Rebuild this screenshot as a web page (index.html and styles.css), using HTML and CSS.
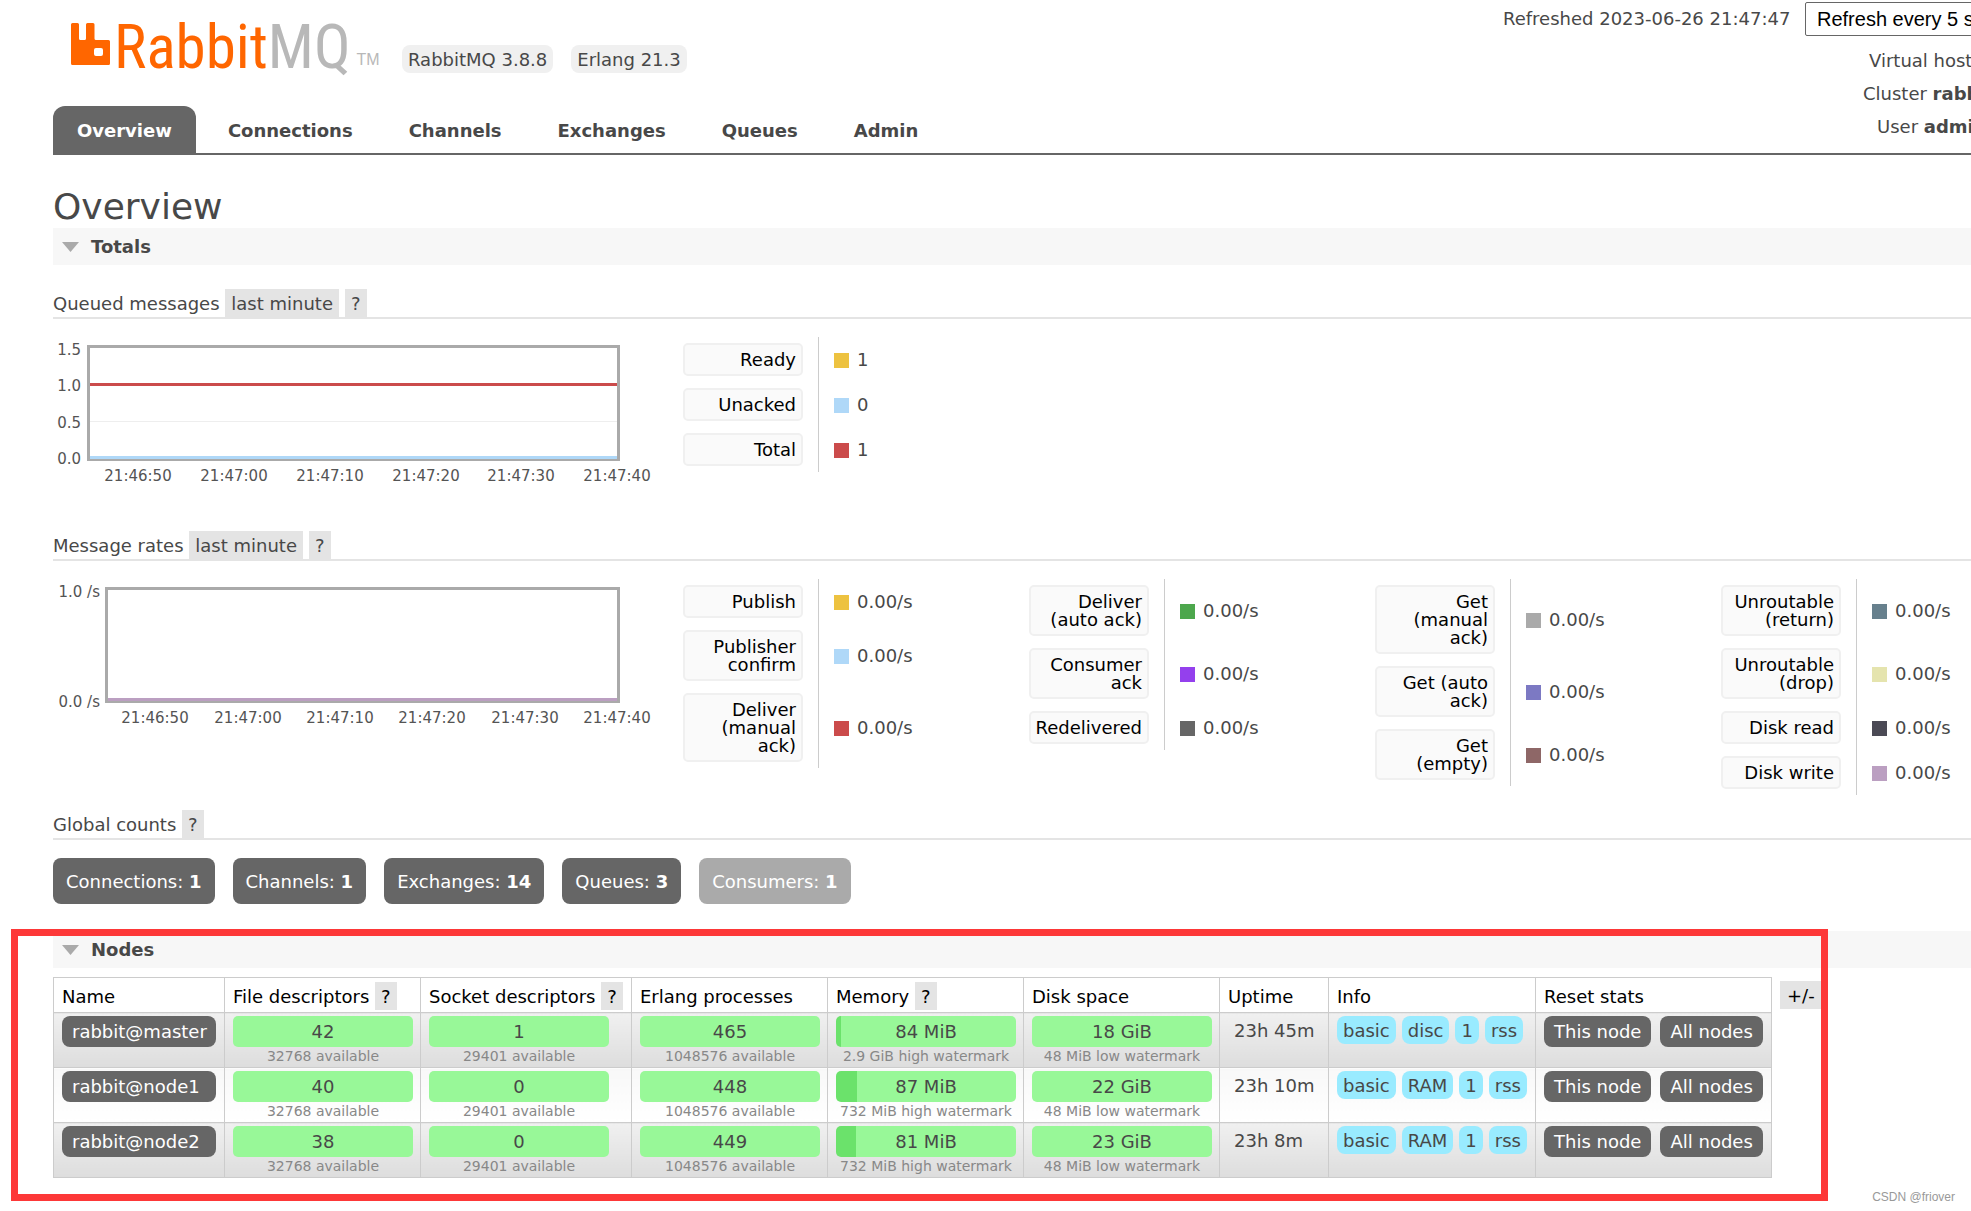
FILE: index.html
```html
<!DOCTYPE html>
<html lang="en">
<head>
<meta charset="utf-8">
<title>RabbitMQ Management</title>
<link rel="stylesheet" href="styles.css">
</head>
<body>
<header class="header">
  <div class="header-main">
    <div class="brand">
      <a class="logo" href="#">
        <svg class="logo-mark" viewBox="0 0 39 42" width="39" height="42" aria-hidden="true"><path fill="#f60" fill-rule="evenodd" d="M1.500 0H6.500Q8 0 8 1.500V15.500Q8 17 9.500 17H13.500Q15 17 15 15.500V1.500Q15 0 16.500 0H22Q23.500 0 23.500 1.500V15.500Q23.500 17 25 17H37.500Q39 17 39 18.500V40.500Q39 42 37.500 42H1.500Q0 42 0 40.500V1.500Q0 0 1.500 0ZM25 25Q23 25 23 27V31Q23 33 25 33H30Q32 33 32 31V27Q32 25 30 25Z"/></svg>
        <span class="logo-text">Rabbit<span class="logo-mq">MQ</span></span><span class="logo-tm">TM</span>
      </a>
      <span class="version">RabbitMQ 3.8.8</span>
      <span class="version">Erlang 21.3</span>
    </div>
    <nav class="tabs">
      <a class="tab selected" href="#">Overview</a>
      <a class="tab" href="#">Connections</a>
      <a class="tab" href="#">Channels</a>
      <a class="tab" href="#">Exchanges</a>
      <a class="tab" href="#">Queues</a>
      <a class="tab" href="#">Admin</a>
    </nav>
  </div>
  <div class="status">
    <div class="refresh">
      <label for="update-every">Refreshed 2023-06-26 21:47:47</label>
      <select id="update-every"><option>Refresh every 5 seconds</option></select>
    </div>
    <div class="status-row vhost">Virtual host</div>
    <div class="status-row cluster">Cluster <b>rabbit@master</b></div>
    <div class="status-row user">User <b>admin</b></div>
  </div>
</header>

<main>
  <h1>Overview</h1>

  <section>
    <h2 class="bar"><svg width="17" height="10" viewBox="0 0 17 10" aria-hidden="true"><path fill="#aaa" d="M0 0H17L8.500 10Z"/></svg>Totals</h2>

    <h3>Queued messages <button class="hint">last minute</button><button class="hint">?</button></h3>
    <div class="stats queued">
      <svg class="chart" width="600" height="152" viewBox="0 0 600 152" role="img" aria-label="Queued messages">
        <path stroke="#eee" d="M37 84.500H564"/>
        <rect x="35.500" y="9.500" width="530" height="113" fill="none" stroke="#aaa" stroke-width="3"/>
        <path stroke="#cb4b4b" stroke-width="3" d="M37 47.500H564"/>
        <path stroke="#afd8f8" stroke-width="3" d="M37 120.500H564"/>
        <g text-anchor="end"><text x="28" y="18">1.5</text><text x="28" y="54">1.0</text><text x="28" y="91">0.5</text><text x="28" y="127">0.0</text></g>
        <g text-anchor="middle"><text x="85" y="144">21:46:50</text><text x="181" y="144">21:47:00</text><text x="277" y="144">21:47:10</text><text x="373" y="144">21:47:20</text><text x="468" y="144">21:47:30</text><text x="564" y="144">21:47:40</text></g>
      </svg>
      <table class="legend">
        <tr><th><button>Ready</button></th><td><i class="swatch c-yellow"></i>1</td></tr>
        <tr><th><button>Unacked</button></th><td><i class="swatch c-blue"></i>0</td></tr>
        <tr><th><button>Total</button></th><td><i class="swatch c-red"></i>1</td></tr>
      </table>
    </div>

    <h3>Message rates <button class="hint">last minute</button><button class="hint">?</button></h3>
    <div class="stats rates">
      <svg class="chart" width="600" height="152" viewBox="0 0 600 152" role="img" aria-label="Message rates">
        <rect x="53.500" y="9.500" width="512" height="113" fill="none" stroke="#aaa" stroke-width="3"/>
        <path stroke="#bb9fc1" stroke-width="3" d="M55 120.500H564"/>
        <g text-anchor="end"><text x="47" y="18">1.0 /s</text><text x="47" y="128">0.0 /s</text></g>
        <g text-anchor="middle"><text x="102" y="144">21:46:50</text><text x="195" y="144">21:47:00</text><text x="287" y="144">21:47:10</text><text x="379" y="144">21:47:20</text><text x="472" y="144">21:47:30</text><text x="564" y="144">21:47:40</text></g>
      </svg>
      <table class="legend">
        <tr><th><button>Publish</button></th><td><i class="swatch c-yellow"></i>0.00/s</td></tr>
        <tr><th><button>Publisher<br>confirm</button></th><td><i class="swatch c-blue"></i>0.00/s</td></tr>
        <tr><th><button>Deliver<br>(manual<br>ack)</button></th><td><i class="swatch c-red"></i>0.00/s</td></tr>
      </table>
      <table class="legend">
        <tr><th><button>Deliver<br>(auto ack)</button></th><td><i class="swatch c-green"></i>0.00/s</td></tr>
        <tr><th><button>Consumer<br>ack</button></th><td><i class="swatch c-purple"></i>0.00/s</td></tr>
        <tr><th><button>Redelivered</button></th><td><i class="swatch c-dark"></i>0.00/s</td></tr>
      </table>
      <table class="legend">
        <tr><th><button>Get<br>(manual<br>ack)</button></th><td><i class="swatch c-grey"></i>0.00/s</td></tr>
        <tr><th><button>Get (auto<br>ack)</button></th><td><i class="swatch c-indigo"></i>0.00/s</td></tr>
        <tr><th><button>Get<br>(empty)</button></th><td><i class="swatch c-brown"></i>0.00/s</td></tr>
      </table>
      <table class="legend">
        <tr><th><button>Unroutable<br>(return)</button></th><td><i class="swatch c-teal"></i>0.00/s</td></tr>
        <tr><th><button>Unroutable<br>(drop)</button></th><td><i class="swatch c-cream"></i>0.00/s</td></tr>
        <tr><th><button>Disk read</button></th><td><i class="swatch c-slate"></i>0.00/s</td></tr>
        <tr><th><button>Disk write</button></th><td><i class="swatch c-mauve"></i>0.00/s</td></tr>
      </table>
    </div>

    <h3>Global counts <button class="hint">?</button></h3>
    <div class="counts">
      <a class="count" href="#">Connections: <b>1</b></a>
      <a class="count" href="#">Channels: <b>1</b></a>
      <a class="count" href="#">Exchanges: <b>14</b></a>
      <a class="count" href="#">Queues: <b>3</b></a>
      <span class="count disabled">Consumers: <b>1</b></span>
    </div>
  </section>

  <section class="nodes">
    <h2 class="bar"><svg width="17" height="10" viewBox="0 0 17 10" aria-hidden="true"><path fill="#aaa" d="M0 0H17L8.500 10Z"/></svg>Nodes</h2>
    <div class="nodes-body">
      <table class="list">
        <colgroup><col class="w-name"><col class="w-bar"><col class="w-socket"><col class="w-bar"><col class="w-bar"><col class="w-bar"><col class="w-uptime"><col class="w-info"><col class="w-reset"></colgroup>
        <thead>
          <tr><th>Name</th><th>File descriptors <button class="hint">?</button></th><th>Socket descriptors <button class="hint">?</button></th><th>Erlang processes</th><th>Memory <button class="hint">?</button></th><th>Disk space</th><th>Uptime</th><th>Info</th><th>Reset stats</th></tr>
        </thead>
        <tbody>
          <tr>
            <td><a class="node" href="#">rabbit@master</a></td>
            <td><div class="meter">42</div><small>32768 available</small></td>
            <td><div class="meter">1</div><small>29401 available</small></td>
            <td><div class="meter">465</div><small>1048576 available</small></td>
            <td><div class="meter" style="--used: 5px">84 MiB</div><small>2.9 GiB high watermark</small></td>
            <td><div class="meter">18 GiB</div><small>48 MiB low watermark</small></td>
            <td class="uptime">23h 45m</td>
            <td><div class="tags"><span>basic</span><span>disc</span><span>1</span><span>rss</span></div></td>
            <td><div class="actions"><button>This node</button><button>All nodes</button></div></td>
          </tr>
          <tr>
            <td><a class="node" href="#">rabbit@node1</a></td>
            <td><div class="meter">40</div><small>32768 available</small></td>
            <td><div class="meter">0</div><small>29401 available</small></td>
            <td><div class="meter">448</div><small>1048576 available</small></td>
            <td><div class="meter" style="--used: 21px">87 MiB</div><small>732 MiB high watermark</small></td>
            <td><div class="meter">22 GiB</div><small>48 MiB low watermark</small></td>
            <td class="uptime">23h 10m</td>
            <td><div class="tags"><span>basic</span><span>RAM</span><span>1</span><span>rss</span></div></td>
            <td><div class="actions"><button>This node</button><button>All nodes</button></div></td>
          </tr>
          <tr>
            <td><a class="node" href="#">rabbit@node2</a></td>
            <td><div class="meter">38</div><small>32768 available</small></td>
            <td><div class="meter">0</div><small>29401 available</small></td>
            <td><div class="meter">449</div><small>1048576 available</small></td>
            <td><div class="meter" style="--used: 20px">81 MiB</div><small>732 MiB high watermark</small></td>
            <td><div class="meter">23 GiB</div><small>48 MiB low watermark</small></td>
            <td class="uptime">23h 8m</td>
            <td><div class="tags"><span>basic</span><span>RAM</span><span>1</span><span>rss</span></div></td>
            <td><div class="actions"><button>This node</button><button>All nodes</button></div></td>
          </tr>
        </tbody>
      </table>
      <button class="hint columns">+/-</button>
    </div>
    <div class="frame"></div>
  </section>
</main>
<footer class="credit">CSDN @friover</footer>
</body>
</html>
```

FILE: styles.css
```css
* { box-sizing: border-box; }

body {
  margin: 0;
  padding-left: 53px;
  overflow-x: hidden;
  position: relative;
  background: #fff;
  color: #484848;
  font: 18px/28px "DejaVu Sans", Verdana, sans-serif;
}

a { text-decoration: none; color: inherit; }
button { font: inherit; color: inherit; border: 0; margin: 0; cursor: pointer; white-space: nowrap; }

/* Header */
.header {
  display: flex;
  justify-content: space-between;
  height: 155px;
  border-bottom: 2px solid #666;
}
.header-main { display: flex; flex-direction: column; justify-content: space-between; }
.brand { display: flex; align-items: flex-end; gap: 18px; height: 73px; padding-left: 18px; }
.logo { display: flex; align-items: flex-end; width: 313px; height: 50px; }
.logo-mark { margin: 0 4px 8px 0; }
.logo-text {
  font: 61px/52px "Liberation Sans Narrow", "Roboto Condensed", sans-serif;
  color: #f60;
}
.logo-mq, .logo-tm { color: #b8b8b8; }
.logo-tm { font: 16px/22px "Liberation Sans", sans-serif; margin: 0 0 2px 6px; }
.version { padding: 1px 6px 0; border-radius: 8px; background: #f0f0f0; line-height: 27px; white-space: nowrap; }

.tabs { display: flex; gap: 8px; }
.tab { padding: 11px 24px 8px; border-radius: 12px 12px 0 0; font-weight: bold; line-height: 28px; }
.tab.selected { background: #666; color: #fff; }

.status { width: 468px; overflow: hidden; white-space: nowrap; }
.refresh { display: flex; gap: 8px; align-items: center; height: 38px; margin-bottom: 6px; }
.refresh label { flex: 0 0 294px; line-height: 34px; }
.refresh select {
  flex: 0 0 270px;
  height: 34px;
  padding: 0 7px;
  border: 1px solid #666;
  border-radius: 2px;
  background: #fff;
  color: #000;
  font: 20px "Liberation Sans", Arial, sans-serif;
}
.status-row { line-height: 33px; }
.vhost { padding-left: 366px; }
.cluster { padding-left: 360px; }
.user { padding-left: 374px; }

/* Headings */
h1 { margin: 0; padding-top: 31px; font-size: 36px; font-weight: normal; line-height: 42px; }
.bar {
  display: flex;
  align-items: center;
  gap: 12px;
  height: 37px;
  margin: 0;
  padding: 1px 0 0 9px;
  background: #f7f7f7;
  font-size: 18px;
}
h3 {
  display: flex;
  align-items: flex-start;
  height: 30px;
  margin: 0;
  border-bottom: 2px solid #e4e4e4;
  font-size: 18px;
  font-weight: normal;
  line-height: 30px;
  white-space: pre;
}
.hint { height: 28px; padding: 2px 6px 0; background: #e4e4e4; line-height: 26px; }
.hint + .hint { margin-left: 6px; }
.bar + h3 { margin-top: 24px; }

/* Charts and legends */
.stats { display: flex; align-items: flex-start; padding-top: 18px; overflow: hidden; }
.queued { height: 212px; }
.rates { height: 249px; }
.chart { flex: none; margin-right: 30px; }
.chart text { font-size: 15px; fill: #545454; }
.legend { flex: none; width: 346px; border-spacing: 0; }
.legend th { width: 136px; padding: 6px 15px 6px 0; border-right: 1px solid #ccc; }
.legend button {
  display: block;
  width: 120px;
  padding: 6px 5px 5px 4px;
  border: 2px solid #f0f0f0;
  border-radius: 5px;
  background: #fafafa;
  color: #000;
  font-weight: normal;
  line-height: 18px;
  text-align: right;
}
.legend td { padding: 0 0 0 15px; line-height: 28px; }
.swatch { display: inline-block; width: 15px; height: 15px; margin-right: 8px; vertical-align: -2px; }
.c-yellow { background: #edc240; }
.c-blue { background: #afd8f8; }
.c-red { background: #cb4b4b; }
.c-green { background: #4da74d; }
.c-purple { background: #9440ed; }
.c-dark { background: #666; }
.c-grey { background: #aaa; }
.c-indigo { background: #7c79c3; }
.c-brown { background: #8e6767; }
.c-teal { background: #67808d; }
.c-cream { background: #e5e4ae; }
.c-slate { background: #4b4a55; }
.c-mauve { background: #bb9fc1; }

/* Global counts */
.counts { display: flex; gap: 18px; padding: 18px 0 27px; }
.count { padding: 10px 13px 8px; border-radius: 8px; background: #666; color: #fff; white-space: nowrap; }
.count.disabled { background: #aaa; }

/* Nodes */
.nodes { position: relative; }
.nodes-body { display: flex; gap: 8px; align-items: flex-start; padding-top: 9px; }
.list { flex: none; width: 1719px; table-layout: fixed; border-collapse: collapse; }
.w-name { width: 171px; }
.w-bar { width: 196px; }
.w-socket { width: 211px; }
.w-uptime { width: 109px; }
.w-info { width: 207px; }
.w-reset { width: 236px; }
.list th, .list td { border: 1px solid #ccc; padding: 3px 8px 0; text-align: left; vertical-align: top; }
.list th { height: 35px; padding-top: 4px; color: #000; font-weight: normal; line-height: 30px; white-space: nowrap; }
.list th .hint { vertical-align: top; }
.list td { height: 55px; white-space: nowrap; }
.list tbody tr:nth-child(odd) td { background: linear-gradient(#f0f0f0, #ddd); }
.list tbody tr:nth-child(even) td { background: linear-gradient(#f8f8f8, #fff); }
.node, .actions button {
  display: block;
  height: 31px;
  padding: 0 10px;
  border-radius: 8px;
  background: #666;
  color: #fff;
  line-height: 31px;
}
.meter {
  --used: 0px;
  width: 180px;
  border-radius: 5px;
  background: linear-gradient(90deg, #6be26b var(--used), #98f898 var(--used));
  line-height: 31px;
  text-align: center;
}
.list small { display: block; width: 180px; color: #888; font-size: 14px; line-height: 18px; text-align: center; }
.list .uptime { padding-left: 14px; line-height: 30px; }
.tags { display: flex; gap: 6px; }
.tags span { padding: 1px 6px 0; border-radius: 8px; background: #99ebff; line-height: 27px; }
.actions { display: flex; gap: 9px; }
.columns { margin-top: 4px; padding: 2px 7px 0; color: #000; }

/* Annotation drawn over the nodes section */
.frame {
  position: absolute;
  left: -42px;
  top: -2px;
  width: 1817px;
  height: 272px;
  border: 7px solid #fd3838;
  pointer-events: none;
}
.credit {
  padding: 11px 16px 6px;
  color: #999;
  font: 12px/16px "Liberation Sans", Arial, sans-serif;
  text-align: right;
}
```
